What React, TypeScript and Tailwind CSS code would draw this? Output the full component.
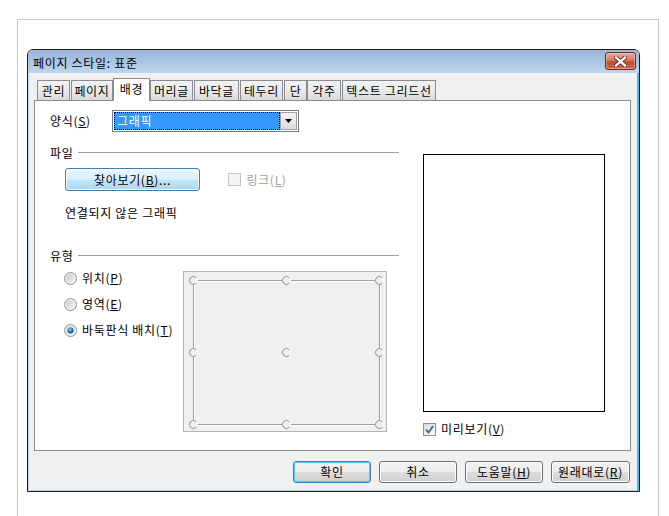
import React from "react";

const F = "font-['Noto_Sans_CJK_KR','Liberation_Sans',sans-serif] tracking-[0.7px]";

function U({ c }: { c: string }) {
  return <span className="underline underline-offset-[1px]">{c}</span>;
}

function Tab({ label, w, selected }: { label: string; w: string; selected?: boolean }) {
  if (selected) {
    return (
      <div
        className={`${w} h-[23px] relative z-10 -mb-px border border-b-0 border-[#898c95] bg-white flex items-center justify-center text-[12px] leading-[16px] text-black pb-[2px]`}
      >
        {label}
      </div>
    );
  }
  return (
    <div
      className={`${w} h-[20px] border border-b-0 border-[#898c95] bg-gradient-to-b from-[#f2f2f2] via-[#ebebeb] to-[#d9d9d9] flex items-center justify-center text-[12px] leading-[16px] text-black`}
    >
      {label}
    </div>
  );
}

function Radio({ checked }: { checked?: boolean }) {
  return (
    <svg width="13" height="13" viewBox="0 0 13 13" className="shrink-0">
      <defs>
        <linearGradient id="rg" x1="0" y1="0" x2="1" y2="1">
          <stop offset="0" stopColor="#c9c9c9" />
          <stop offset="1" stopColor="#f7f7f7" />
        </linearGradient>
        <radialGradient id="rd" cx="0.4" cy="0.35" r="0.7">
          <stop offset="0" stopColor="#8fd2f4" />
          <stop offset="0.6" stopColor="#1a6fb0" />
          <stop offset="1" stopColor="#0b3d6e" />
        </radialGradient>
      </defs>
      <circle cx="6.5" cy="6.5" r="6" fill="#f4f4f4" stroke="#8e8f8f" strokeWidth="1" />
      <circle cx="6.5" cy="6.5" r="4.5" fill="url(#rg)" />
      {checked && <circle cx="6.5" cy="6.5" r="3" fill="url(#rd)" />}
    </svg>
  );
}

function Btn({ children, focused, w }: { children: React.ReactNode; focused?: boolean; w: string }) {
  return (
    <div
      className={`${w} h-[22px] rounded-[3px] border ${
        focused ? "border-[#3c7fb1] shadow-[inset_0_0_0_1px_#48d0f8]" : "border-[#707070] shadow-[inset_0_0_0_1px_#fcfcfc]"
      } bg-[linear-gradient(to_bottom,#f2f2f2_0%,#ebebeb_50%,#dddddd_51%,#cfcfcf_100%)] flex items-center justify-center text-[12px] leading-[16px] text-black`}
    >
      {children}
    </div>
  );
}

function GridCircle({ x, y }: { x: number; y: number }) {
  return (
    <g>
      <circle cx={x} cy={y} r="4" fill="#f0f0f0" stroke="#ffffff" strokeWidth="1" />
      <path
        d={`M ${x + 2.8} ${y - 2.8} A 4 4 0 1 0 ${x + 2.8} ${y + 2.8}`}
        fill="none"
        stroke="#8a8a8a"
        strokeWidth="1"
      />
    </g>
  );
}

export default function App() {
  const xs = [9.5, 102.5, 195.5];
  const ys = [8.5, 80.5, 152.5];
  return (
    <div className={`w-[669px] h-[516px] bg-white pt-[19px] pl-[17px] overflow-hidden ${F}`}>
      <div className="w-[642px] h-[497px] border-l border-t border-r border-[#c8c8c8] pl-[9px] pt-[29px]">
        {/* Dialog */}
        <div className="w-[613px] h-[443px] border border-[#1e1e1e] rounded-t-[6px] flex flex-col overflow-hidden">
          {/* Title bar */}
          <div className="h-[23px] shrink-0 bg-gradient-to-b from-[#98b4d8] to-[#bfd5ee] flex items-start justify-between pl-[5px] pr-[3px] pt-[2px]">
            <span className="text-[12px] leading-[16px] text-black mt-[3px]">페이지 스타일: 표준</span>
            <div className="w-[31px] h-[18px] rounded-[3px] border border-[#6b2a1e] bg-[linear-gradient(to_bottom,#e8a895_0%,#d67b62_45%,#c4492c_55%,#d0684e_100%)] flex items-center justify-center shadow-[inset_0_0_0_1px_rgba(255,255,255,0.35)]">
              <svg width="13" height="11" viewBox="0 0 13 11">
                <path d="M2 1.5 L11 9.5 M11 1.5 L2 9.5" stroke="#5a2418" strokeWidth="4" strokeLinecap="square" />
                <path d="M2 1.5 L11 9.5 M11 1.5 L2 9.5" stroke="#ffffff" strokeWidth="2.4" strokeLinecap="square" />
              </svg>
            </div>
          </div>
          {/* Body */}
          <div className="flex-1 bg-[#f0f0f0] border-l border-[#b9d1ea] border-r-2 border-r-[#52b6e6] border-b border-b-[#b9d1ea] pl-[5px] pr-[6px] pt-[4px] flex flex-col">
            {/* Tabs */}
            <div className="h-[23px] flex items-end pl-[3px] text-[12px]">
              <Tab label="관리" w="w-[33px]" />
              <div className="w-px" />
              <Tab label="페이지" w="w-[42px]" />
              <Tab label="배경" w="w-[37px]" selected />
              <Tab label="머리글" w="w-[43px]" />
              <div className="w-px" />
              <Tab label="바닥글" w="w-[45px]" />
              <div className="w-px" />
              <Tab label="테두리" w="w-[43px]" />
              <div className="w-px" />
              <Tab label="단" w="w-[23px]" />
              <Tab label="각주" w="w-[34px]" />
              <div className="w-px" />
              <Tab label="텍스트 그리드선" w="w-[94px]" />
            </div>
            {/* Panel */}
            <div className="w-[597px] h-[351px] border border-[#898c95] bg-white flex text-[12px] leading-[16px] text-black">
              {/* Left column */}
              <div className="w-[364px] pl-[15px] pt-[9px] flex flex-col">
                <div className="flex items-center h-[22px]">
                  <span className="w-[62px]">
                    양식(<U c="S" />)
                  </span>
                  <div className="w-[187px] h-[22px] border border-[#7a7a7a] p-px flex bg-white">
                    <div className="flex-1 bg-[#3399ff] border border-dotted border-black flex items-center pl-[2px] text-white">
                      그래픽
                    </div>
                    <div className="w-[17px] border border-[#a0a0a0] bg-gradient-to-b from-[#f4f4f4] to-[#dcdcdc] flex items-center justify-center">
                      <svg width="7" height="4" viewBox="0 0 7 4">
                        <path d="M0 0 H7 L3.5 4 Z" fill="#000" />
                      </svg>
                    </div>
                  </div>
                </div>
                {/* 파일 */}
                <div className="mt-[13px] flex items-center h-[16px]">
                  <span>파일</span>
                  <div className="flex-1 ml-[5px] h-[2px] border-t border-[#a0a0a0] border-b border-b-white" />
                </div>
                <div className="mt-[7px] flex items-center h-[23px] pl-[15px]">
                  <div className="w-[135px] h-[23px] rounded-[3px] border border-[#3c7fb1] bg-[linear-gradient(to_bottom,#eaf6fd_0%,#d9f0fc_50%,#bee6fd_51%,#a7d9f5_100%)] shadow-[inset_0_0_0_1px_#f5fbfe] flex items-center justify-center">
                    찾아보기(<U c="B" />)...
                  </div>
                  <div className="ml-[28px] w-[13px] h-[13px] border border-[#c5c5c5] bg-[#f4f4f4]" />
                  <span className="ml-[2px] text-[#a0a0a0]">
                    &nbsp;링크(<U c="L" />)
                  </span>
                </div>
                <div className="mt-[14px] pl-[15px] h-[16px]">연결되지 않은 그래픽</div>
                {/* 유형 */}
                <div className="mt-[27px] flex items-center h-[16px]">
                  <span>유형</span>
                  <div className="flex-1 ml-[5px] h-[2px] border-t border-[#a0a0a0] border-b border-b-white" />
                </div>
                <div className="mt-[6px] flex">
                  <div className="w-[133px] pl-[14px] flex flex-col gap-[10px]">
                    <div className="flex items-center h-[16px] gap-[5px]">
                      <Radio />
                      <span>
                        위치(<U c="P" />)
                      </span>
                    </div>
                    <div className="flex items-center h-[16px] gap-[5px]">
                      <Radio />
                      <span>
                        영역(<U c="E" />)
                      </span>
                    </div>
                    <div className="flex items-center h-[16px] gap-[5px]">
                      <Radio checked />
                      <span>
                        바둑판식 배치(<U c="T" />)
                      </span>
                    </div>
                  </div>
                  <div className="mt-px w-[204px] h-[161px] border border-[#b5b5b5] bg-[#f0f0f0]">
                    <svg width="202" height="159" viewBox="0 0 202 159">
                      <path d="M9.5 8.5 H195.5 V152.5 H9.5 Z" fill="none" stroke="#ffffff" strokeWidth="1" transform="translate(1 1)" />
                      <path d="M9.5 8.5 H195.5 V152.5 H9.5 Z" fill="none" stroke="#a0a0a0" strokeWidth="1" />
                      {ys.map((y) => xs.map((x) => <GridCircle key={`${x}-${y}`} x={x} y={y} />))}
                    </svg>
                  </div>
                </div>
              </div>
              {/* Right column */}
              <div className="pl-[24px] pt-[53px] flex flex-col">
                <div className="w-[182px] h-[258px] border border-black bg-white" />
                <div className="mt-[9px] flex items-center h-[16px]">
                  <div className="w-[13px] h-[13px] border border-[#8e8f8f] bg-gradient-to-br from-[#dcdcdc] to-[#fafafa] flex items-center justify-center">
                    <svg width="9" height="9" viewBox="0 0 9 9">
                      <path d="M1 4.5 L3.5 7.5 L8 1" fill="none" stroke="#4a5f97" strokeWidth="1.8" />
                    </svg>
                  </div>
                  <span className="ml-[5px]">
                    미리보기(<U c="V" />)
                  </span>
                </div>
              </div>
            </div>
            {/* Buttons */}
            <div className="mt-[10px] flex justify-end gap-[8px] pr-px">
              <Btn w="w-[78px]" focused>
                확인
              </Btn>
              <Btn w="w-[78px]">취소</Btn>
              <Btn w="w-[78px]">
                도움말(<U c="H" />)
              </Btn>
              <Btn w="w-[79px]">
                원래대로(<U c="R" />)
              </Btn>
            </div>
          </div>
        </div>
      </div>
    </div>
  );
}
